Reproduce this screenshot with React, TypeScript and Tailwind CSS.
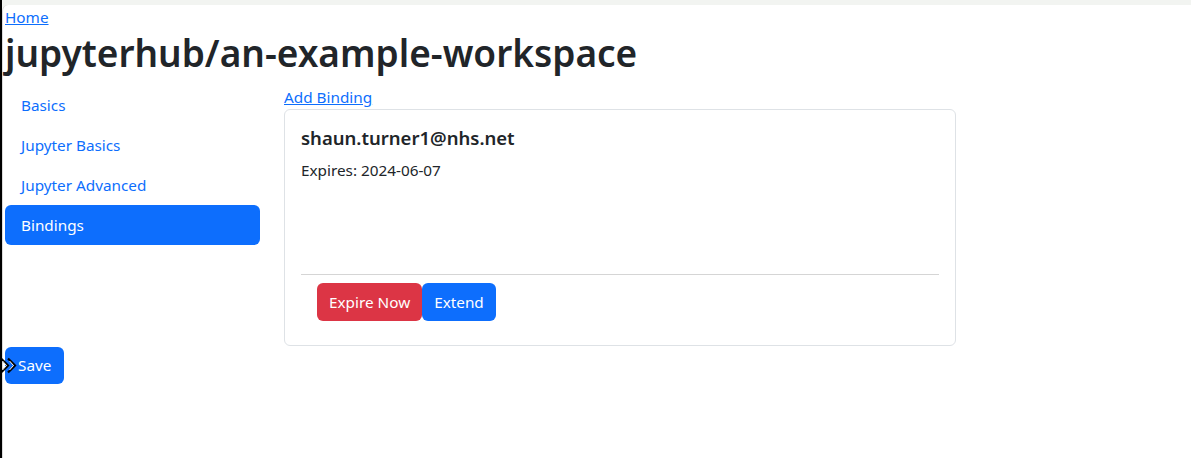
import React from 'react';

const navItems = ['Basics', 'Jupyter Basics', 'Jupyter Advanced', 'Bindings'];

export default function App() {
  const active = 'Bindings';

  return (
    <div className="h-[458px] w-full overflow-hidden border-l-2 border-black bg-[#f2f4f1] pt-[5px] font-['Noto_Sans',sans-serif] text-[15.3px] text-[#212529]">
      <div className="h-full rounded-tl-md border-l border-[#dcdcdc] bg-white pl-[2px]">
        <a href="#" className="block leading-6 text-[#0d6efd] underline">
          Home
        </a>
        <h1 className="mb-2 text-[37px] font-semibold leading-[48px]">jupyterhub/an-example-workspace</h1>

        <div className="flex">
          {/* sidebar */}
          <div className="flex w-[255px] flex-col">
            {navItems.map((item) => (
              <a
                key={item}
                href="#"
                className={
                  item === active
                    ? 'block h-10 rounded-md bg-[#0d6efd] px-4 leading-10 text-white'
                    : 'block h-10 px-4 leading-10 text-[#0d6efd]'
                }
              >
                {item}
              </a>
            ))}
          </div>

          {/* bindings */}
          <div className="ml-[24px] w-[672px]">
            <a href="#" className="block leading-6 text-[#0d6efd] underline">
              Add Binding
            </a>
            <div className="rounded-md border border-[#dee2e6] px-4 pb-[24px] pt-4">
              <h5 className="mb-2 text-[18.5px] font-semibold leading-6">shaun.turner1@nhs.net</h5>
              <p className="leading-6">Expires: 2024-06-07</p>
              <hr className="mt-[92px] border-t border-[#d5d5d5]" />
              <div className="mt-2 flex pl-4">
                <button className="h-[38px] rounded-md bg-[#dc3545] px-3 text-white">Expire Now</button>
                <button className="h-[38px] rounded-md bg-[#0d6efd] px-3 text-white">Extend</button>
              </div>
            </div>
          </div>
        </div>

        <div className="relative mt-px">
          <button className="h-[37px] rounded-md bg-[#0d6efd] px-[13px] text-white">Save</button>
          {/* cursor-like chevrons over the button */}
          <svg className="absolute left-[-5px] top-[10px]" width="18" height="17" viewBox="0 0 18 17">
            <polyline points="1,1.5 8,8.5 1,15.5" fill="none" stroke="#000" strokeWidth="2.2" />
            <polyline points="8,1.5 15,8.5 8,15.5" fill="none" stroke="#000" strokeWidth="2.2" />
            <polyline points="2.5,4 6.5,8.5 2.5,13" fill="none" stroke="#fff" strokeWidth="1" />
            <polyline points="9.5,4 13.5,8.5 9.5,13" fill="none" stroke="#fff" strokeWidth="1" />
          </svg>
        </div>
      </div>
    </div>
  );
}
